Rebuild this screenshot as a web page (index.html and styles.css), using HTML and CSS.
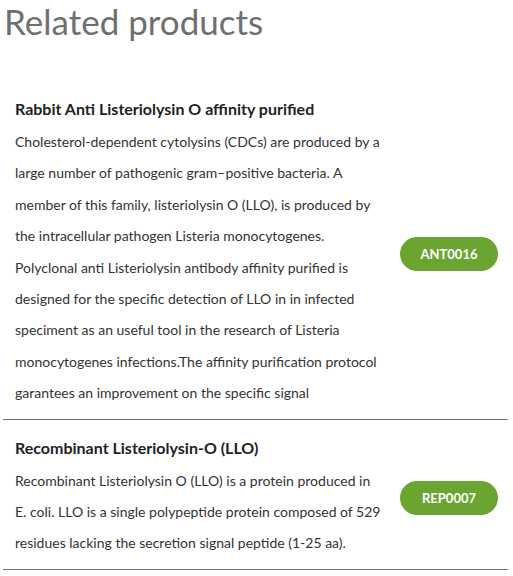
FILE: index.html
```html
<!DOCTYPE html>
<html>
<head>
<meta charset="utf-8">
<link rel="stylesheet" href="styles.css">
</head>
<body>
<h2 class="heading">Related products</h2>
<div class="products">
  <div class="product">
    <div class="info">
      <h3 class="title">Rabbit Anti Listeriolysin O affinity purified</h3>
      <p class="desc">Cholesterol-dependent cytolysins (CDCs) are produced by a large number of pathogenic gram–positive bacteria. A member of this family, listeriolysin O (LLO), is produced by the intracellular pathogen Listeria monocytogenes. Polyclonal anti Listeriolysin antibody affinity purified is designed for the specific detection of LLO in in infected speciment as an useful tool in the research of Listeria monocytogenes infections.The affinity purification protocol garantees an improvement on the specific signal</p>
    </div>
    <div class="action"><a class="btn">ANT0016</a></div>
  </div>
  <div class="product">
    <div class="info">
      <h3 class="title">Recombinant Listeriolysin-O (LLO)</h3>
      <p class="desc">Recombinant Listeriolysin O (LLO) is a protein produced in E. coli. LLO is a single polypeptide protein composed of 529 residues lacking the secretion signal peptide (1-25 aa).</p>
    </div>
    <div class="action"><a class="btn">REP0007</a></div>
  </div>
</div>
</body>
</html>
```
FILE: styles.css
```css
html, body {
  margin: 0;
  padding: 0;
  background: #ffffff;
}
body {
  font-family: Lato, "Noto Sans", sans-serif;
  color: #333333;
}
.heading {
  margin: 0 0 39px 0;
  padding-left: 4px;
  font-size: 35px;
  line-height: 42px;
  font-weight: 400;
  color: #6f6f6f;
}
.products {
  margin: 0 5px 0 3px;
}
.product {
  display: flex;
  align-items: center;
  padding: 18px 10px 10px 12px;
  border-bottom: 1px solid #777777;
}
.info {
  flex: 0 0 370px;
}
.title {
  margin: 0 0 7px 0;
  font-size: 16px;
  line-height: 20px;
  font-weight: 700;
  color: #222222;
}
.desc {
  margin: 0;
  font-size: 14px;
  line-height: 31.4px;
  color: #333333;
}
.action {
  flex: 1;
  display: flex;
  justify-content: flex-end;
}
.btn {
  display: inline-flex;
  align-items: center;
  justify-content: center;
  width: 98px;
  height: 34px;
  border-radius: 17px;
  background: #6aa532;
  color: #ffffff;
  font-size: 13px;
  font-weight: 700;
  text-decoration: none;
}
```
